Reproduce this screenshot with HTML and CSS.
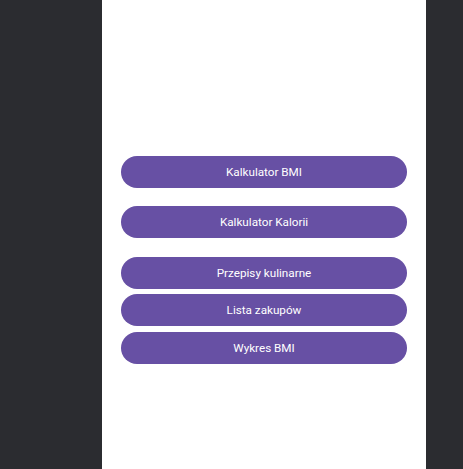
FILE: index.html
```html
<!DOCTYPE html>
<html lang="pl">
<head>
<meta charset="utf-8">
<link rel="stylesheet" href="styles.css">
</head>
<body>
<div class="screen">
  <div class="menu">
    <button class="btn gap-lg">Kalkulator BMI</button>
    <button class="btn gap-lg2">Kalkulator Kalorii</button>
    <button class="btn gap-sm">Przepisy kulinarne</button>
    <button class="btn gap-sm2">Lista zakupów</button>
    <button class="btn">Wykres BMI</button>
  </div>
</div>
</body>
</html>
```
FILE: styles.css
```css
html, body {
  margin: 0;
  padding: 0;
  height: 100%;
}
body {
  background: #2b2c30;
  font-family: Roboto, "Noto Sans", sans-serif;
}
.screen {
  margin-left: 102px;
  width: 324px;
  height: 469px;
  background: #ffffff;
  box-sizing: border-box;
  padding: 156px 19px 0 19px;
}
.menu {
  display: flex;
  flex-direction: column;
}
.btn {
  height: 32px;
  border: none;
  border-radius: 16px;
  background: #6750a4;
  color: #ffffff;
  font-family: Roboto, "Noto Sans", sans-serif;
  font-size: 11.7px;
  font-weight: 400;
  letter-spacing: 0;
  padding: 0;
  margin: 0;
}
.gap-lg { margin-bottom: 18px; }
.gap-lg2 { margin-bottom: 18.7px; }
.gap-sm { margin-bottom: 5.6px; }
.gap-sm2 { margin-bottom: 5.4px; }
```
